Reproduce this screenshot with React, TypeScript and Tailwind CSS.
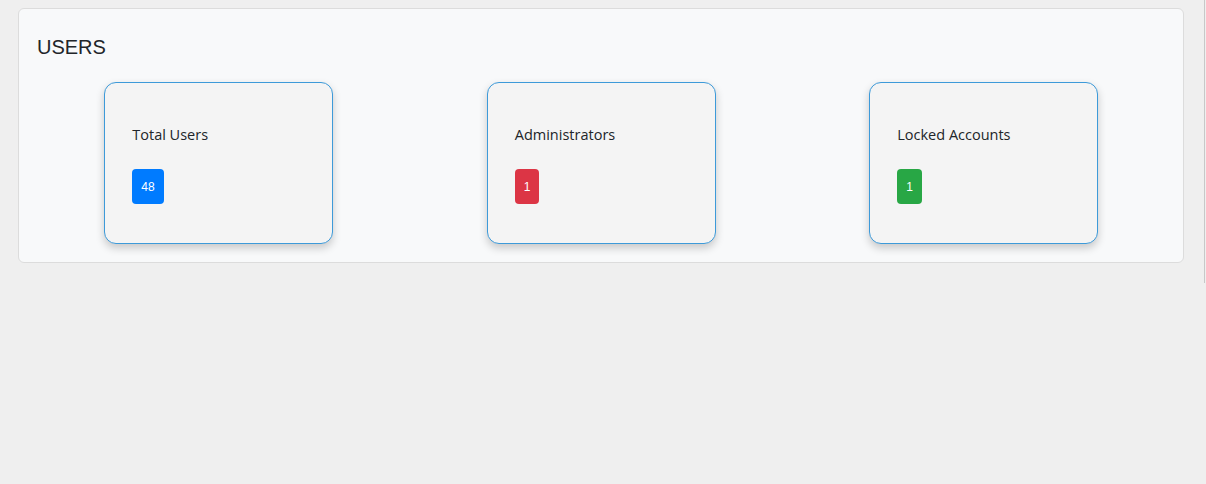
const stats = [
  { label: 'Total Users', value: 48, color: 'bg-[#007bff]' },
  { label: 'Administrators', value: 1, color: 'bg-[#dc3545]' },
  { label: 'Locked Accounts', value: 1, color: 'bg-[#28a745]' },
]

export default function App() {
  return (
    <div className="min-h-[484px] w-full bg-[#efefef]">
      <div className="h-[283px] w-[1205px] border-r border-[#c8c8c8] pt-2 pl-[18px] pr-5">
        <div className="rounded-md border border-[#dcdcdc] bg-[#f8f9fa] pl-[8.5px] pr-[8px] pt-[26px] pb-[18px]">
          <h1 className="pl-[9.5px] font-['Liberation_Sans',Arial,sans-serif] text-[20px] leading-6 text-[#212529]">
            USERS
          </h1>
          <div className="mt-[23px] grid grid-cols-3">
            {stats.map((s) => (
              <div key={s.label} className="flex justify-center">
                <div className="h-[162px] w-[229px] rounded-xl border border-[#3d9ad9] bg-[#f4f4f4] pl-[27px] pt-[42px] shadow-[0_4px_8px_rgba(0,0,0,0.2)]">
                  <div className="font-['Open_Sans',sans-serif] text-[14.5px] font-medium leading-5 text-[#212529]">
                    {s.label}
                  </div>
                  <div className="mt-[24px] flex">
                    <span
                      className={`${s.color} flex h-[35px] items-center rounded px-[9px] font-['Liberation_Sans',Arial,sans-serif] text-[12px] text-white`}
                    >
                      {s.value}
                    </span>
                  </div>
                </div>
              </div>
            ))}
          </div>
        </div>
      </div>
    </div>
  )
}
